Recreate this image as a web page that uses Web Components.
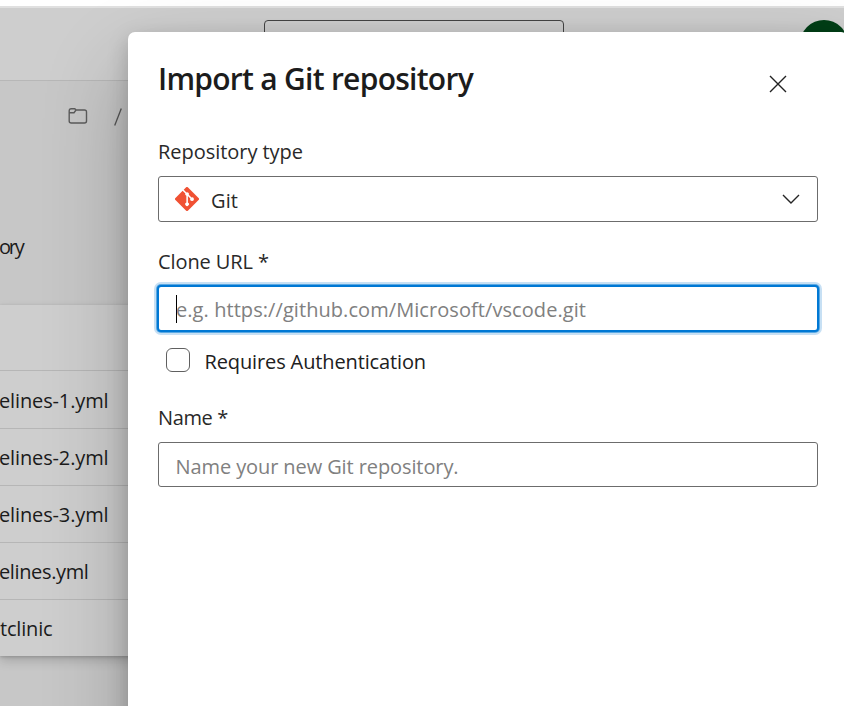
<!DOCTYPE html>
<html lang="en"><head><meta charset="utf-8"><title>Import a Git repository</title>
<style>html,body{margin:0;height:100%;overflow:hidden;background:#fff;font-family:"Open Sans","Noto Sans",sans-serif;color:#222}</style></head>
<body><repo-app></repo-app>
<script>
const define=(name,html,ready)=>customElements.define(name,class extends HTMLElement{
 connectedCallback(){if(this.shadowRoot)return;this.attachShadow({mode:'open'}).innerHTML=html;if(ready)ready(this);}
});
/* Text whose tracking is tuned so the run takes a given width. */
define('fit-text','<style>:host{display:inline-block;white-space:pre}</style><span></span>',el=>{
 const s=el.shadowRoot.querySelector('span');s.textContent=el.getAttribute('text');
 const w=+el.getAttribute('w');
 if(w)s.style.letterSpacing=((w-s.getBoundingClientRect().width)/s.textContent.length)+'px';
});
define('file-row',`<style>:host{display:flex;box-sizing:border-box;height:57px;border-bottom:1px solid #b6b6b6;align-items:center;font-size:20px;line-height:28px;color:#1b1b1b;padding-top:1px}:host([blank]){height:66px}:host(:nth-child(2)){height:58px;padding-top:3px}:host(:last-child){border-bottom:0;height:56px;padding-top:1px}</style><slot></slot>`);
define('app-header',`<style>:host{display:flex;height:73px;box-sizing:border-box;border-bottom:1px solid #b7b7b7;background:#cecece;padding:12px 0 0 264px}
.search{box-sizing:border-box;width:300px;height:46px;border:1px solid #444;border-radius:4px;flex:none}.avatar{width:48px;height:48px;border-radius:50%;background:#003f16;margin-left:236px;flex:none}</style><div class="search"></div><div class="avatar"></div>`);
define('repo-files',`<style>:host{display:block;background:#cecece;box-shadow:0 5px 10px rgba(0,0,0,.16),0 1px 3px rgba(0,0,0,.18);height:351px}</style><slot></slot>`);
define('git-logo',`<style>:host{display:block;width:24px;height:24px}svg{display:block}</style>
<svg width="24" height="24" viewBox="0 0 24 24"><path fill="#f05133" d="M23.55 10.93 13.07.45a1.55 1.55 0 0 0-2.19 0L8.71 2.63l2.76 2.76a1.84 1.84 0 0 1 2.33 2.34l2.66 2.66a1.84 1.84 0 1 1-1.1 1.03l-2.48-2.48v6.53a1.84 1.84 0 1 1-1.51-.05V8.83a1.84 1.84 0 0 1-1-2.41L7.64 3.7.45 10.88a1.55 1.55 0 0 0 0 2.19l10.48 10.48a1.55 1.55 0 0 0 2.19 0l10.43-10.43a1.55 1.55 0 0 0 0-2.19z"/></svg>`);
define('form-label',`<style>:host{display:block;height:28px;line-height:28px;font-size:20px;color:#292929}</style><slot></slot>`);
define('form-box',`<style>:host{display:flex;box-sizing:border-box;height:46px;border:1px solid #6c6c6c;border-radius:3px;padding:4px 17px 0 16.5px;align-items:center;font-size:20px;line-height:28px;color:#292929;background:#fff}
:host([short]){height:45px}:host([placeholder]){color:#808080}
:host([focused]){height:47px;margin:0 -1px;border:2px solid #0078d4;border-radius:4px;box-shadow:0 0 0 1px #5ba9e3,0 0 0 3px #c7e0f4;padding:3px 17px 0 17px}
:host([focused])::before{content:"";width:1px;height:28px;background:#000;margin:-3px -1px 0 0}</style><slot></slot>`);
define('check-option',`<style>:host{display:flex;align-items:center;gap:14.5px;padding-left:8px;height:28px;font-size:20px;line-height:28px;color:#202020}.box{box-sizing:border-box;width:24px;height:24px;border:1px solid #606060;border-radius:6px;margin-bottom:4px}</style><span class="box"></span><slot></slot>`);
define('import-dialog',`<style>
:host{position:absolute;left:128px;top:32px;width:720px;height:760px;box-sizing:border-box;padding:28px 30px;background:#fff;border-radius:7px;box-shadow:0 38px 86px rgba(0,0,0,.24),0 7px 21px rgba(0,0,0,.2)}
header{display:flex;justify-content:space-between;height:38px;line-height:38px;font-size:30px;font-weight:600;color:#1c1c1c;margin-bottom:40px}
.close{margin:15px 31px 0 0;flex:none}.git{margin:-4px 0 0 -.5px}.value{margin-left:12px;flex:1}.chev{margin:-3px 0 0 0;flex:none}
form-box{margin-top:10px}.url{margin-top:26px}form-box[focused]{margin-top:9px}check-option{margin-top:16px}.name{margin-top:28px}</style>
<header><fit-text text="Import a Git repository" w="315"></fit-text><svg class="close" width="18" height="18" viewBox="0 0 18 18" fill="none" stroke="#222" stroke-width="1.4"><path d="m1 1 16 16M17 1 1 17"/></svg></header>
<form-label><fit-text text="Repository type" w="145"></fit-text></form-label>
<form-box><git-logo class="git"></git-logo><fit-text class="value" text="Git" w="27"></fit-text><svg class="chev" width="18" height="11" viewBox="0 0 18 11" fill="none" stroke="#252525" stroke-width="1.4"><path d="m1 1 8 8 8-8"/></svg></form-box>
<form-label class="url"><fit-text text="Clone URL *" w="111"></fit-text></form-label>
<form-box focused placeholder><fit-text text="e.g. https://github.com/Microsoft/vscode.git" w="410"></fit-text></form-box>
<check-option><fit-text text="Requires Authentication" w="221.5"></fit-text></check-option>
<form-label class="name"><fit-text text="Name *" w="70"></fit-text></form-label>
<form-box short placeholder><fit-text text="Name your new Git repository." w="283"></fit-text></form-box>`);
define('repo-app',`<style>
:host{display:block;position:relative;width:844px;height:706px;overflow:hidden;background:#fff;padding-top:6px;box-sizing:border-box}
main{height:698px;border-top:2px solid #e0e0e0;background:#c7c7c7}
nav{display:flex;align-items:center;height:70px;padding-left:68px;gap:26px;font-size:20px;color:#555}
.tree{display:flex;align-items:center;height:154px;box-sizing:border-box;padding-top:37px;font-size:20px;color:#1b1b1b}.l{margin-left:-1px}.slash{margin-top:1px}</style>
<main><app-header></app-header>
<nav><svg width="20" height="18" viewBox="0 0 20 18" fill="none" stroke="#5c5c5c" stroke-width="1.4"><path d="M1.2 4V14q0 2 2 2H16.5q2 0 2-2V5q0-2-2-2H8L6.8 1.7H3.2Q1.2 1.7 1.2 4ZM1.2 5.7H6L8 3"/></svg><svg class="slash" width="8" height="18" viewBox="0 0 8 18" stroke="#555" stroke-width="1.3"><path d="M7.3.5.7 17.5"/></svg></nav>
<div class="tree"><fit-text class="l" text="ory" w="23.5"></fit-text></div>
<repo-files><file-row blank></file-row><file-row><fit-text class="l" text="elines-1.yml" w="109.5"></fit-text></file-row><file-row><fit-text class="l" text="elines-2.yml" w="109.5"></fit-text></file-row><file-row><fit-text class="l" text="elines-3.yml" w="109.5"></fit-text></file-row><file-row><fit-text class="l" text="elines.yml" w="89.5"></fit-text></file-row><file-row><fit-text text="tclinic" w="52.5"></fit-text></file-row></repo-files></main>
<import-dialog></import-dialog>`);
</script></body></html>
